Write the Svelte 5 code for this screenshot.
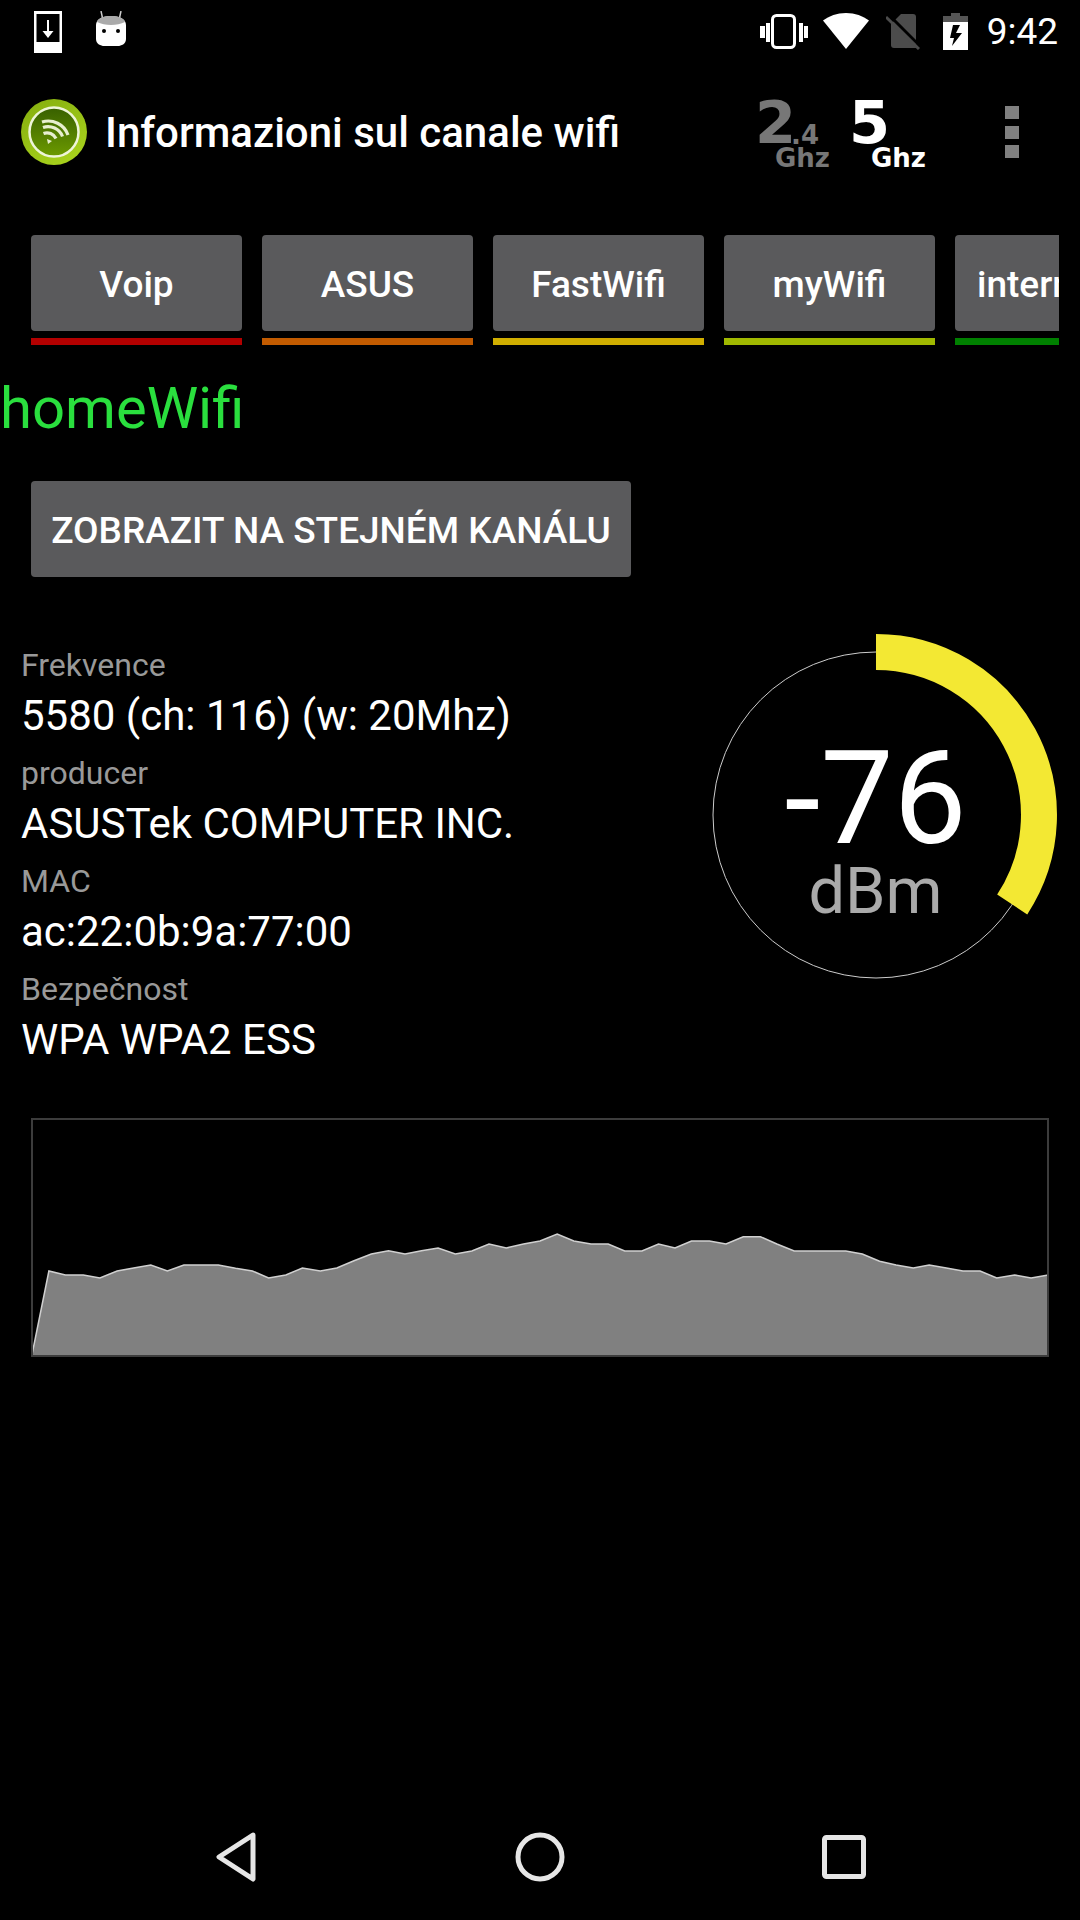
<script>
  const tabs = [
    { name: 'Voip', color: '#b30000' },
    { name: 'ASUS', color: '#c25b00' },
    { name: 'FastWifi', color: '#d0ae00' },
    { name: 'myWifi', color: '#a0b800' },
    { name: 'internet', color: '#008000', clipped: true }
  ];
  const rows = [
    ['Frekvence', '5580 (ch: 116) (w: 20Mhz)'],
    ['producer', 'ASUSTek COMPUTER INC.'],
    ['MAC', 'ac:22:0b:9a:77:00'],
    ['Bezpečnost', 'WPA WPA2 ESS']
  ];
  const left = [[92,768],[142,513],[190,525],[242,525],[290,534],[340,513],[388,504],[438,495],[486,513],[534,495],[584,495],[634,495],[684,505],[733,513],[780,534],[830,525],[878,504],[930,513],[978,504],[1028,482],[1078,462],[1128,452],[1176,462],[1224,452],[1272,444],[1322,462],[1370,453],[1420,432],[1470,444],[1520,432]];
  const right = [[0,423],[50,402],[98,423],[148,432],[198,432],[246,453],[296,453],[344,432],[392,444],[440,423],[492,423],[540,432],[590,410],[640,410],[688,432],[738,453],[788,453],[838,453],[888,453],[936,462],[986,484],[1034,495],[1084,504],[1130,495],[1180,504],[1228,513],[1278,513],[1326,534],[1378,525],[1426,534],[1476,525]];
  const k = 540 / 1568;
  const pts = [
    ...left.map(([x, y]) => [x * k - 31, 1100 + y / 3 - 1118]),
    ...right.map(([x, y]) => [540 + x * k - 31, 1100 + y / 3 - 1118])
  ];
  const line = pts.map((p) => p[0].toFixed(1) + ',' + p[1].toFixed(1)).join(' ');
  const area = line + ' ' + pts[pts.length - 1][0].toFixed(1) + ',' + pts[0][1].toFixed(1);
</script>

<div class="screen">
  <header class="status">
    <div class="status-left">
      <svg class="ic-dl" width="30" height="42" viewBox="0 0 30 42">
        <path fill="#fff" fill-rule="evenodd" d="M1 0h28v42H1zM3.500 3v28h23V3z" />
        <path fill="none" stroke="#fff" stroke-width="2" d="M15 9v14" />
        <path fill="#fff" d="M9.500 20h11L15 27z" />
      </svg>
      <svg class="ic-droid" width="32" height="36" viewBox="0 0 32 36">
        <path stroke="#ccc" stroke-width="1.500" d="M6 0l1.500 7M26 0l-1.500 7" />
        <path fill="#fff" d="M1 14C1 8 8 5 16 5s15 3 15 9v14c0 5-5 7-8 7H9c-3 0-8-2-8-7z" />
        <path fill="#aaa" d="M2 11C3 7 9 5 16 5s13 2 14 6c-4 2-9 3-14 3s-10-1-14-3z" />
        <circle cx="9" cy="20" r="2" fill="#000" />
        <circle cx="23" cy="20" r="2" fill="#000" />
      </svg>
    </div>
    <div class="status-right">
      <svg class="ic-vib" width="48" height="36" viewBox="0 0 48 36">
        <rect x="12.500" y="1.500" width="22" height="32" rx="4" fill="none" stroke="#fff" stroke-width="3" />
        <path fill="#fff" d="M0 12h5v12H0zM6 9h4v19H6zM39 9h4v19h-4zM44 12h4v12h-4z" />
      </svg>
      <svg class="ic-wifi" width="46" height="36" viewBox="0 0 46 36">
        <path fill="#fff" d="M23 36L0 7.500C6 3 14 0 23 0s17 3 23 7.500z" />
      </svg>
      <svg class="ic-sim" width="34" height="37" viewBox="0 0 34 37">
        <path fill="#4c4c4c" d="M15 1h12c2 0 3 1 3 3v31H8c-2 0-3-1-3-3V11z" />
        <path stroke="#000" stroke-width="3" d="M3 2l32 32" />
        <path stroke="#4c4c4c" stroke-width="3" d="M0 4l33 32" />
      </svg>
      <svg class="ic-bat" width="25" height="37" viewBox="0 0 25 37">
        <path fill="#555" d="M8 0h9v3h8v7H0V3h8z" />
        <path fill="#fff" d="M0 9h25v28H0z" />
        <path fill="#000" d="M10 12h7l-4 8h6L9 33l2-8H7z" />
      </svg>
      <span class="clock">9:42</span>
    </div>
  </header>

  <div class="actionbar">
    <svg class="logo" width="66" height="66" viewBox="0 0 66 66">
      <defs>
        <linearGradient id="g1" x1="0" y1="0" x2="0.600" y2="1">
          <stop offset="0" stop-color="#84ad0e" />
          <stop offset="1" stop-color="#a6d01c" />
        </linearGradient>
        <linearGradient id="g2" x1="0" y1="0" x2="0" y2="1">
          <stop offset="0" stop-color="#386000" />
          <stop offset="1" stop-color="#6c9a00" />
        </linearGradient>
      </defs>
      <circle cx="33" cy="33" r="33" fill="url(#g1)" />
      <circle cx="33" cy="33" r="24.500" fill="url(#g2)" stroke="#eef5d8" stroke-width="2.500" />
      <path fill="none" stroke="#e8efd0" stroke-width="3.200" d="M21 23A21 21 0 0 1 47 36M22 28.500A15.500 15.500 0 0 1 41.500 37.500M22.500 34.500A10 10 0 0 1 35 39.500" />
      <path fill="#e8efd0" d="M26 40l5 2-4 3z" />
    </svg>
    <h1 class="title">Informazioni sul canale wifi</h1>
    <svg class="bands" width="175" height="80" viewBox="0 0 175 80">
      <g fill="#777" class="bandtext">
        <text x="0" y="51" font-size="59">2</text>
        <text x="36" y="52" font-size="26">.4</text>
        <text x="20" y="75" font-size="26">Ghz</text>
      </g>
      <g fill="#fff" class="bandtext">
        <text x="94" y="51" font-size="59">5</text>
        <text x="116" y="75" font-size="26">Ghz</text>
      </g>
    </svg>
    <div class="overflow"><i></i><i></i><i></i></div>
  </div>

  <nav class="tabs">
    {#each tabs as t}
      <div class="tab">
        <button class="btn tab-btn" class:clipped={t.clipped}>{t.name}</button>
        <span class="strip" style="background:{t.color}"></span>
      </div>
    {/each}
  </nav>

  <h2 class="ssid">homeWifi</h2>

  <button class="btn wide">ZOBRAZIT NA STEJNÉM KANÁLU</button>

  <section class="details">
    <dl class="info">
      {#each rows as [label, value]}
        <dt>{label}</dt>
        <dd>{value}</dd>
      {/each}
    </dl>
    <svg class="gauge" width="400" height="390" viewBox="0 0 400 390">
      <circle cx="196" cy="185" r="163" fill="none" stroke="#ccc" stroke-width="1" />
      <path d="M196 22A163 163 0 0 1 332.200 274.500" fill="none" stroke="#f3e833" stroke-width="36" />
      <text class="num" x="195.500" y="213" text-anchor="middle">-76</text>
      <text class="unit" x="195.500" y="283" text-anchor="middle">dBm</text>
    </svg>
  </section>

  <svg class="chart" width="1020" height="240" viewBox="0 0 1020 240">
    <polygon points={area} fill="#808080" />
    <polyline points={line} fill="none" stroke="#d0d0d0" stroke-width="1.500" />
    <rect x="1" y="1" width="1016" height="237" fill="none" stroke="#3c3c3c" stroke-width="2" />
  </svg>

  <div class="grow"></div>

  <footer class="navbar">
    <svg width="40" height="50" viewBox="0 0 40 50" class="nav-back">
      <path d="M37 3L3 25l34 22z" fill="none" stroke="#e6e6e6" stroke-width="5" stroke-linejoin="round" />
    </svg>
    <svg width="50" height="50" viewBox="0 0 50 50" class="nav-home">
      <circle cx="25" cy="25" r="22" fill="none" stroke="#e6e6e6" stroke-width="5" />
    </svg>
    <svg width="44" height="44" viewBox="0 0 44 44" class="nav-rec">
      <rect x="2.500" y="2.500" width="39" height="39" rx="2" fill="none" stroke="#e6e6e6" stroke-width="5" />
    </svg>
  </footer>
</div>

<style>
  :global(body) {
    margin: 0;
    background: #000;
  }
  .screen {
    width: 1080px;
    height: 1920px;
    background: #000;
    color: #fff;
    font-family: Roboto, "Liberation Sans", sans-serif;
    display: flex;
    flex-direction: column;
    overflow: hidden;
  }
  .status {
    height: 72px;
    flex: none;
    display: flex;
    justify-content: space-between;
    align-items: flex-start;
  }
  .status-left {
    display: flex;
    align-items: flex-start;
    padding: 11px 0 0 33px;
    gap: 32px;
  }
  .status-right {
    display: flex;
    align-items: flex-start;
    padding: 13px 22px 0 0;
  }
  .ic-vib { margin-right: 15px; margin-top: 1px; }
  .ic-wifi { margin-right: 17px; }
  .ic-sim { margin-right: 23px; }
  .ic-bat { margin-right: 19px; }
  .clock {
    font-size: 37px;
    line-height: 38px;
    font-weight: 400;
  }
  .actionbar {
    height: 120px;
    flex: none;
    display: flex;
    align-items: center;
    margin-bottom: 27px;
  }
  .logo { margin-left: 21px; flex: none; }
  .title {
    margin: 0 0 0 18px;
    font-size: 42px;
    font-weight: 500;
    white-space: nowrap;
    width: 647px;
  }
  .bands { margin-left: 3px; flex: none; }
  .bandtext { font-family: "DejaVu Sans", sans-serif; font-weight: 700; }
  .overflow {
    margin-left: 75px;
    display: flex;
    flex-direction: column;
    gap: 6.500px;
  }
  .overflow i {
    display: block;
    width: 14px;
    height: 13px;
    background: #808080;
  }
  .tabs {
    margin: 16px 0 0 31px;
    width: 1028px;
    display: flex;
    gap: 20px;
    overflow: hidden;
    flex: none;
  }
  .tab {
    flex: 0 0 211px;
    display: flex;
    flex-direction: column;
    gap: 7px;
  }
  .btn {
    display: block;
    border: 0;
    background: #5a5a5c;
    color: #fff;
    border-radius: 4px;
    font-family: inherit;
    font-weight: 500;
    font-size: 37px;
    padding: 2px 0 0;
  }
  .tab-btn {
    height: 96px;
    width: 211px;
    white-space: nowrap;
    overflow: hidden;
  }
  .clipped {
    text-align: left;
    padding-left: 22px;
  }
  .strip { display: block; height: 7px; }
  .ssid {
    margin: 0;
    height: 136px;
    line-height: 127px;
    font-size: 58px;
    font-weight: 400;
    color: #2adf3e;
    flex: none;
  }
  .wide {
    margin-left: 31px;
    width: 600px;
    height: 96px;
    flex: none;
  }
  .details {
    margin-top: 53px;
    height: 450px;
    flex: none;
    display: flex;
    justify-content: space-between;
  }
  .info {
    margin: 0;
    padding: 8px 0 0 21px;
  }
  dt {
    font-size: 32px;
    line-height: 54px;
    color: #999;
  }
  dd {
    margin: -3px 0 3px;
    font-size: 42px;
    line-height: 54px;
    white-space: nowrap;
  }
  .num { font-size: 130px; fill: #fff; }
  .unit { font-size: 65px; fill: #aaa; }
  .gauge { flex: none; }
  .chart {
    margin: 38px 0 0 31px;
    flex: none;
  }
  .grow { flex: 1; }
  .navbar {
    height: 126px;
    flex: none;
    display: flex;
    align-items: flex-start;
  }
  .nav-back, .nav-home, .nav-rec { flex: none; }
  .nav-back { margin: 38px 0 0 216px; }
  .nav-home { margin: 38px 0 0 259px; }
  .nav-rec { margin: 41px 0 0 257px; }
</style>
